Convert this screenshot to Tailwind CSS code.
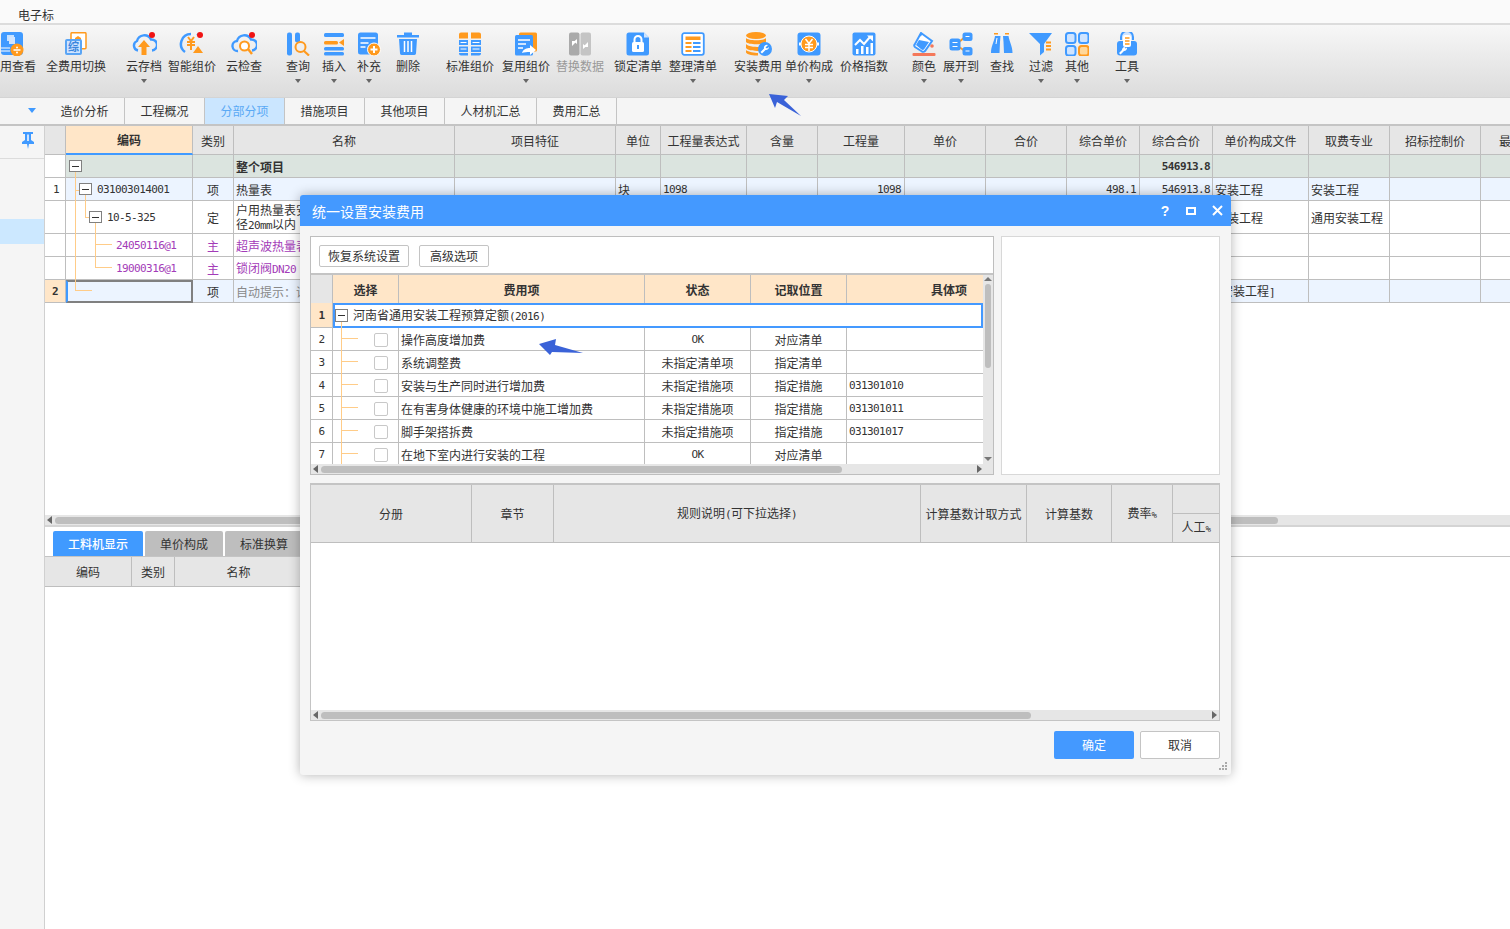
<!DOCTYPE html>
<html lang="zh-CN">
<head>
  <meta charset="UTF-8" />
  <title>统一设置安装费用</title>
  <script src="https://cdn.jsdelivr.net/npm/@tailwindcss/browser@4"></script>
</head>
<body class="bg-white text-[#333] text-[12px] leading-[14px] font-['Noto_Sans_CJK_SC','Liberation_Sans',sans-serif]">
<div class="relative w-[1510px] h-[929px] overflow-hidden flex flex-col">

  <!-- menu -->
  <div class="h-[25px] shrink-0 bg-[#fafafa] border-b-2 border-[#dcdcdc] pl-[18px] pt-[8px]">电子标</div>

  <!-- toolbar -->
  <div class="h-[73px] shrink-0 flex items-start pt-[7px] bg-gradient-to-b from-[#f7f7f7] to-[#dcdcdc] border-b border-[#d4d4d4] whitespace-nowrap">
    <div class="w-[48px] ml-[-12px] flex flex-col items-center">
      <svg class="w-[24px] h-[24px] shrink-0" viewBox="0 0 24 24"><rect x="1" width="22" height="23" rx="3" fill="#409aff"/><path d="M7 3h7v6H7z" fill="#fff" opacity=".7"/><path d="M9 5h6v7H9z" fill="#cfe4ff"/><path d="M1 16h9M1 19h9" stroke="#fff"/><circle cx="17" cy="18" r="6.5" fill="#ff9a1e"/><path d="M13.5 18h7" stroke="#fff" stroke-width="1.5"/><circle cx="17" cy="15.5" r="1" fill="#fff"/><circle cx="17" cy="20.5" r="1" fill="#fff"/></svg>
      <div class="mt-[3px]">费用查看</div>
    </div>
    <div class="w-[60px] ml-[10px] flex flex-col items-center">
      <svg class="w-[24px] h-[24px] shrink-0" viewBox="0 0 24 24"><rect x="7" y="0.7" width="15" height="16" rx="1" fill="#fff" stroke="#ff9a1e" stroke-width="1.5"/><path d="M11 6l3-2 3 2v3h-6z" fill="#ff9a1e"/><rect x="1" y="7" width="17" height="16" rx="2" fill="#5aa5f5"/><rect x="3" y="9" width="13" height="12" fill="#cfe4ff"/><text x="9.500" y="19" font-size="11" text-anchor="middle" fill="#3b86dd" font-weight="700">综</text></svg>
      <div class="mt-[3px]">全费用切换</div>
    </div>
    <div class="w-[36px] ml-[20px] flex flex-col items-center">
      <svg class="w-[26px] h-[24px] shrink-0" viewBox="0 0 26 24"><path d="M7 18.500A5 5 0 0 1 6 9a7.500 7.500 0 0 1 14-1.500 5.500 5.500 0 0 1 1 11" fill="none" stroke="#409aff" stroke-width="2.400"/><path d="M13 8l6 7h-3.500v8h-5v-8H7z" fill="#ff9a1e"/><circle cx="21" cy="3" r="3" fill="#f01414"/></svg>
      <div class="mt-[3px]">云存档</div>
      <div class="mt-[6px] border-x-[3px] border-t-[4px] border-x-transparent border-t-[#666]"></div>
    </div>
    <div class="w-[48px] ml-[6px] flex flex-col items-center">
      <svg class="w-[26px] h-[24px] shrink-0" viewBox="0 0 26 24"><path d="M12 2a10 10 0 0 0-6 18" fill="none" stroke="#409aff" stroke-width="2.500"/><path d="M20 20l-2-3M18 2l1 1" stroke="#409aff" stroke-width="2"/><path d="M9 5l3 4 3-4M8 10h8M8 13h8M12 9v9" fill="none" stroke="#ff9a1e" stroke-width="2"/><path d="M19 14l5 7h-10z" fill="#ff9a1e"/><circle cx="21" cy="3" r="3" fill="#f01414"/></svg>
      <div class="mt-[3px]">智能组价</div>
    </div>
    <div class="w-[36px] ml-[10px] flex flex-col items-center">
      <svg class="w-[26px] h-[24px] shrink-0" viewBox="0 0 26 24"><path d="M7 19A5 5 0 0 1 6 9a7.500 7.500 0 0 1 14-1.500 5.500 5.500 0 0 1 1 11" fill="none" stroke="#409aff" stroke-width="2.400"/><circle cx="13.500" cy="14" r="4.500" fill="#fff" stroke="#ff9a1e" stroke-width="2"/><path d="M17 17l4 5" stroke="#ff9a1e" stroke-width="2.400"/><circle cx="21" cy="3" r="3" fill="#f01414"/></svg>
      <div class="mt-[3px]">云检查</div>
    </div>
    <div class="w-[24px] ml-[24px] flex flex-col items-center">
      <svg class="w-[24px] h-[24px] shrink-0" viewBox="0 0 24 24"><rect x="1" y="0.500" width="5" height="23" rx="2" fill="#409aff"/><rect x="9" y="0.500" width="5" height="10" rx="2" fill="#409aff"/><circle cx="14.500" cy="15" r="5" fill="none" stroke="#ff9a1e" stroke-width="2"/><path d="M18 19l5 4.500" stroke="#ff9a1e" stroke-width="2.200"/></svg>
      <div class="mt-[3px]">查询</div>
      <div class="mt-[6px] border-x-[3px] border-t-[4px] border-x-transparent border-t-[#666]"></div>
    </div>
    <div class="w-[24px] ml-[12px] flex flex-col items-center">
      <svg class="w-[24px] h-[24px] shrink-0" viewBox="0 0 24 24"><rect x="2" y="1" width="20" height="4" rx="1.500" fill="#409aff"/><rect x="2" y="9" width="14" height="3.500" rx="1.500" fill="#ff9a1e"/><path d="M22 7v7l-5-3.500z" fill="#ff9a1e"/><rect x="2" y="15" width="20" height="3.500" rx="1.500" fill="#409aff"/><rect x="2" y="20" width="20" height="3.500" rx="1.500" fill="#409aff"/></svg>
      <div class="mt-[3px]">插入</div>
      <div class="mt-[6px] border-x-[3px] border-t-[4px] border-x-transparent border-t-[#666]"></div>
    </div>
    <div class="w-[24px] ml-[11px] flex flex-col items-center">
      <svg class="w-[24px] h-[24px] shrink-0" viewBox="0 0 24 24"><rect x="1" y="0.500" width="20" height="22" rx="2.500" fill="#409aff"/><path d="M3.500 6h15M3.500 11h8M3.500 15h5" stroke="#fff" stroke-width="1.500"/><circle cx="17" cy="17.500" r="6.500" fill="#ff9a1e" stroke="#fff"/><path d="M13.500 17.500h7M17 14v7" stroke="#fff" stroke-width="2"/></svg>
      <div class="mt-[3px]">补充</div>
      <div class="mt-[6px] border-x-[3px] border-t-[4px] border-x-transparent border-t-[#666]"></div>
    </div>
    <div class="w-[24px] ml-[15px] flex flex-col items-center">
      <svg class="w-[24px] h-[24px] shrink-0" viewBox="0 0 24 24"><path d="M1 3h22v2.500H1zM8 .500h8V3H8zM3 7h18l-1 14.500a2 2 0 0 1-2 1.500H6a2 2 0 0 1-2-1.500z" fill="#409aff"/><path d="M8.500 9v11M12 9v11M15.500 9v11" stroke="#fff" stroke-width="1.500"/></svg>
      <div class="mt-[3px]">删除</div>
    </div>
    <div class="w-[48px] ml-[26px] flex flex-col items-center">
      <svg class="w-[24px] h-[24px] shrink-0" viewBox="0 0 24 24"><path d="M1 2.500A2 2 0 0 1 3 .500h7v6H1zM13 .500h8a2 2 0 0 1 2 2v4H13z" fill="#ff9a1e"/><path d="M1 8h9v5H1zM13 8h10v5H13zM1 14.500h9V20H1zM13 14.500h10V20H13z" fill="#409aff"/><path d="M1 21h9v2.500H3a2 2 0 0 1-2-2zM13 21h10v.5a2 2 0 0 1-2 2h-8z" fill="#409aff"/><path d="M2.500 10.500h6M2.500 17h6M14.500 10.500h7M14.500 17h7" stroke="#fff"/></svg>
      <div class="mt-[3px]">标准组价</div>
    </div>
    <div class="w-[48px] ml-[8px] flex flex-col items-center">
      <svg class="w-[24px] h-[24px] shrink-0" viewBox="0 0 24 24"><rect x="5" y="0.500" width="18" height="19" rx="1.500" fill="#ff9a1e"/><rect x="1" y="3" width="18" height="20.500" rx="1.500" fill="#409aff"/><path d="M4 8h12M4 12h8M4 16h5" stroke="#fff" stroke-width="1.500"/><path d="M8 21c1-4 5-5 8-5v-3l6 5-6 5v-3c-3 0-6 0-8 1z" fill="#fff"/></svg>
      <div class="mt-[3px]">复用组价</div>
      <div class="mt-[6px] border-x-[3px] border-t-[4px] border-x-transparent border-t-[#666]"></div>
    </div>
    <div class="w-[48px] ml-[6px] flex flex-col items-center text-[#999]">
      <svg class="w-[24px] h-[24px] shrink-0" viewBox="0 0 24 24"><rect x="1" y="0.500" width="10.500" height="23" rx="2" fill="#aaa"/><rect x="12.500" y="0.500" width="10.500" height="23" rx="2" fill="#c4c4c4"/><path d="M4 14V9h5M9 7v5l-3-2.500z" fill="#fff"/><path d="M20 10v5h-5M15 17v-5l3 2.500z" fill="#fff"/></svg>
      <div class="mt-[3px]">替换数据</div>
    </div>
    <div class="w-[48px] ml-[10px] flex flex-col items-center">
      <svg class="w-[24px] h-[24px] shrink-0" viewBox="0 0 24 24"><path d="M3 .500h15l5 5V21a2.500 2.500 0 0 1-2.500 2.500H3A2.500 2.500 0 0 1 .5 21V3A2.500 2.500 0 0 1 3 .500z" fill="#409aff"/><path d="M18 .500l5 5h-5z" fill="#cfe4ff"/><rect x="6" y="10" width="12" height="10" rx="1.500" fill="#fff"/><path d="M8.500 10V7.500a3.500 3.500 0 0 1 7 0V10" fill="none" stroke="#fff" stroke-width="2"/><rect x="11" y="13" width="2" height="4" fill="#409aff"/></svg>
      <div class="mt-[3px]">锁定清单</div>
    </div>
    <div class="w-[48px] ml-[7px] flex flex-col items-center">
      <svg class="w-[24px] h-[24px] shrink-0" viewBox="0 0 24 24"><rect x="1.200" y="1.200" width="21.600" height="21.600" rx="2" fill="#fff" stroke="#409aff" stroke-width="1.800"/><rect x="4.500" y="4.500" width="15" height="3.500" fill="#ff9a1e"/><path d="M4.500 10h6v2h-6zM4.500 14h6v2h-6zM4.500 18h6v2h-6z" fill="#ff9a1e"/><path d="M12 10h7.500v2H12zM12 14h7.500v2H12zM12 18h7.500v2H12z" fill="#409aff"/></svg>
      <div class="mt-[3px]">整理清单</div>
      <div class="mt-[6px] border-x-[3px] border-t-[4px] border-x-transparent border-t-[#666]"></div>
    </div>
    <div class="w-[48px] ml-[17px] flex flex-col items-center">
      <svg class="w-[24px] h-[24px] shrink-0 overflow-visible" viewBox="0 0 24 24"><ellipse cx="10" cy="3.500" rx="10" ry="3.500" fill="#ff9a1e"/><path d="M0 6c2 3 18 3 20 0v4c-2 3-18 3-20 0zM0 12c2 3 12 3 14 3v4c-3 0-12 0-14-3zM0 18c2 2 9 3 12 3v2.500c-4 0-11-.5-12-3z" fill="#ff9a1e"/><circle cx="19" cy="17" r="7" fill="#409aff"/><path d="M22 13a3 3 0 0 0-4 3.500L14.500 20l1.500 1.500 3.500-3.500A3 3 0 0 0 23 15l-2 1.500-1.500-1z" fill="#fff"/></svg>
      <div class="mt-[3px]">安装费用</div>
      <div class="mt-[6px] border-x-[3px] border-t-[4px] border-x-transparent border-t-[#666]"></div>
    </div>
    <div class="w-[48px] ml-[3px] flex flex-col items-center">
      <svg class="w-[24px] h-[24px] shrink-0" viewBox="0 0 24 24"><rect x="0.500" y="0.500" width="23" height="23" rx="3" fill="#409aff"/><circle cx="12" cy="12" r="8" fill="#ff9a1e" stroke="#fff"/><path d="M8.500 7l3.500 4.500L15.500 7M8 12.500h8M8 15.500h8M12 11.500V19" fill="none" stroke="#fff" stroke-width="1.500"/><path d="M2 12h2M20 12h2" stroke="#fff" stroke-width="3"/></svg>
      <div class="mt-[3px]">单价构成</div>
      <div class="mt-[6px] border-x-[3px] border-t-[4px] border-x-transparent border-t-[#666]"></div>
    </div>
    <div class="w-[48px] ml-[7px] flex flex-col items-center">
      <svg class="w-[24px] h-[24px] shrink-0" viewBox="0 0 24 24"><rect x="0.500" y="0.500" width="23" height="23" rx="2" fill="#409aff"/><path d="M3 13l5-5 4 4 6-7" fill="none" stroke="#fff" stroke-width="2"/><path d="M15 3.500h6v6z" fill="#fff"/><path d="M4 17h2.500v5H4zM9 14h2.500v8H9zM14 15h2.500v7H14zM18.500 11H21v11h-2.500z" fill="#fff"/></svg>
      <div class="mt-[3px]">价格指数</div>
    </div>
    <div class="w-[24px] ml-[24px] flex flex-col items-center">
      <svg class="w-[24px] h-[24px] shrink-0" viewBox="0 0 24 24"><path d="M9 1l11 8-7 10c-1 1-2 1-3 .500L3 15c-1-1-1-2 0-3z" fill="#fff" stroke="#409aff" stroke-width="2"/><path d="M4 13l3-5 10 2-5 7.500c-1 .5-1.500.5-2.500 0z" fill="#409aff"/><path d="M8 4l2-3" stroke="#409aff" stroke-width="2"/><circle cx="20" cy="14" r="1.800" fill="#f4785a"/><rect x="0.500" y="21" width="23" height="3" rx="1" fill="#f4785a"/></svg>
      <div class="mt-[3px]">颜色</div>
      <div class="mt-[6px] border-x-[3px] border-t-[4px] border-x-transparent border-t-[#666]"></div>
    </div>
    <div class="w-[36px] ml-[7px] flex flex-col items-center">
      <svg class="w-[24px] h-[24px] shrink-0" viewBox="0 0 24 24"><path d="M10 10l6-5M10 15l6 4" stroke="#ff9a1e" stroke-width="2"/><rect x="0.500" y="6.500" width="11" height="12" rx="2.500" fill="#409aff"/><path d="M3.500 10.500h5M3.500 14.500h5" stroke="#fff"/><rect x="13.500" y="0.500" width="10" height="8.500" rx="2.500" fill="#409aff"/><rect x="13.500" y="15" width="10" height="8.500" rx="2.500" fill="#409aff"/><path d="M16.500 4.500h4M16.500 19h4" stroke="#fff"/></svg>
      <div class="mt-[3px]">展开到</div>
      <div class="mt-[6px] border-x-[3px] border-t-[4px] border-x-transparent border-t-[#666]"></div>
    </div>
    <div class="w-[24px] ml-[11px] flex flex-col items-center">
      <svg class="w-[24px] h-[24px] shrink-0" viewBox="0 0 24 24"><path d="M4 1h4v1.500H4zM15 1h4v1.500h-4z" fill="#ff9a1e"/><path d="M5 4h5.500L10 10 9.500 21H1c0-7 3-11 4-17zM13 4h5.500c1 6 4 10 4 17H14l-.5-11z" fill="#409aff"/><path d="M7 6L6 12" stroke="#fff"/></svg>
      <div class="mt-[3px]">查找</div>
    </div>
    <div class="w-[24px] ml-[15px] flex flex-col items-center">
      <svg class="w-[24px] h-[24px] shrink-0" viewBox="0 0 24 24"><path d="M0 1h23l-8 11v8l-4 3.500V12z" fill="#409aff"/><path d="M17 10.500h5M17 14h5M17 17.500h5" stroke="#ff9a1e" stroke-width="2"/></svg>
      <div class="mt-[3px]">过滤</div>
      <div class="mt-[6px] border-x-[3px] border-t-[4px] border-x-transparent border-t-[#666]"></div>
    </div>
    <div class="w-[24px] ml-[12px] flex flex-col items-center">
      <svg class="w-[24px] h-[24px] shrink-0" viewBox="0 0 24 24"><rect x="1" y="1" width="9.500" height="10" rx="2.500" fill="#cfe4ff" stroke="#409aff" stroke-width="2"/><rect x="14" y="1" width="9.500" height="10" rx="2.500" fill="#cfe4ff" stroke="#409aff" stroke-width="2"/><rect x="1" y="14" width="9.500" height="9.500" rx="2.500" fill="#cfe4ff" stroke="#409aff" stroke-width="2"/><rect x="14" y="14" width="9.500" height="9.500" rx="2.500" fill="#ffd79a" stroke="#ff9a1e" stroke-width="2"/></svg>
      <div class="mt-[3px]">其他</div>
      <div class="mt-[6px] border-x-[3px] border-t-[4px] border-x-transparent border-t-[#666]"></div>
    </div>
    <div class="w-[24px] ml-[26px] flex flex-col items-center">
      <svg class="w-[24px] h-[24px] shrink-0" viewBox="0 0 24 24"><path d="M6 8V5a6 6 0 0 1 12 0v3" fill="#cfe4ff" stroke="#409aff" stroke-width="2"/><rect x="2" y="9" width="20" height="14.500" rx="3" fill="#409aff"/><rect x="8" y="3" width="8" height="12" rx="2" fill="#fff"/><path d="M10 6h4.500M10 9h4.500M10 12h4.500" stroke="#ff9a1e" stroke-width="1.500"/><path d="M11 15a3 3 0 0 0-4 3L4 21l1.500 1.500L9 19a3 3 0 0 0 3-3.500l-1.500 1-1-1z" fill="#fff"/></svg>
      <div class="mt-[3px]">工具</div>
      <div class="mt-[6px] border-x-[3px] border-t-[4px] border-x-transparent border-t-[#666]"></div>
    </div>
  </div>

  <!-- tabs -->
  <div class="h-[28px] shrink-0 flex bg-[#f5f5f5] border-b-2 border-[#c4c4c4]">
    <div class="w-[45px] flex items-center justify-end pr-[9px] pb-[2px]"><div class="border-x-[4px] border-t-[5px] border-x-transparent border-t-[#409aff]"></div></div>
    <div class="w-[80px] border-r border-[#c4c4c4] flex items-center justify-center">造价分析</div>
    <div class="w-[80px] border-r border-[#c4c4c4] flex items-center justify-center">工程概况</div>
    <div class="w-[80px] border-r border-[#c4c4c4] flex items-center justify-center bg-[#cbe6ff] text-[#5aa9f5]">分部分项</div>
    <div class="w-[80px] border-r border-[#c4c4c4] flex items-center justify-center">措施项目</div>
    <div class="w-[80px] border-r border-[#c4c4c4] flex items-center justify-center">其他项目</div>
    <div class="w-[92px] border-r border-[#c4c4c4] flex items-center justify-center">人材机汇总</div>
    <div class="w-[80px] border-r border-[#c4c4c4] flex items-center justify-center">费用汇总</div>
  </div>

  <!-- body -->
  <div class="flex-1 flex min-h-0">
    <div class="w-[45px] shrink-0 bg-[#f5f5f5] border-r border-[#d0d0d0]">
      <div class="h-[33px] border-b border-[#dcdcdc] flex justify-end pr-[9px] pt-[6px]">
        <svg class="w-[14px] h-[17px]" viewBox="0 0 14 17"><path d="M2 0h10v2h-2v6l3 2v2H8l-1 5-1-5H1v-2l3-2V2H2z" fill="#409aff"/><path d="M6 2.500h2V9H6z" fill="#cfe4ff"/></svg>
      </div>
      <div class="h-[60px]"></div>
      <div class="h-[25px] bg-[#cce8ff]"></div>
    </div>
    <div class="flex-1 min-w-0 flex flex-col">
      <div class="h-[389px] shrink-0 overflow-hidden">
        <table class="table-fixed border-separate border-spacing-0 w-[1496px] [&_td]:pt-[1px]">
          <colgroup><col class="w-[21px]"/><col class="w-[127px]"/><col class="w-[41px]"/><col class="w-[221px]"/><col class="w-[161px]"/><col class="w-[45px]"/><col class="w-[86px]"/><col class="w-[71px]"/><col class="w-[87px]"/><col class="w-[81px]"/><col class="w-[81px]"/><col class="w-[73px]"/><col class="w-[73px]"/><col class="w-[96px]"/><col class="w-[81px]"/><col class="w-[91px]"/><col class="w-[60px]"/></colgroup>
          <tr class="h-[29px] bg-[#e6e6e6] text-center">
            <td class="border-r border-b border-[#bebebe]"></td>
            <td class="border-r border-b-2 border-r-[#bebebe] border-b-[#409aff] bg-[#ffe6c8] font-bold">编码</td>
            <td class="border-r border-b border-[#bebebe]">类别</td>
            <td class="border-r border-b border-[#bebebe]">名称</td>
            <td class="border-r border-b border-[#bebebe]">项目特征</td>
            <td class="border-r border-b border-[#bebebe]">单位</td>
            <td class="border-r border-b border-[#bebebe]">工程量表达式</td>
            <td class="border-r border-b border-[#bebebe]">含量</td>
            <td class="border-r border-b border-[#bebebe]">工程量</td>
            <td class="border-r border-b border-[#bebebe]">单价</td>
            <td class="border-r border-b border-[#bebebe]">合价</td>
            <td class="border-r border-b border-[#bebebe]">综合单价</td>
            <td class="border-r border-b border-[#bebebe]">综合合价</td>
            <td class="border-r border-b border-[#bebebe]">单价构成文件</td>
            <td class="border-r border-b border-[#bebebe]">取费专业</td>
            <td class="border-r border-b border-[#bebebe]">招标控制价</td>
            <td class="border-b border-[#bebebe] text-left pl-[18px]">最</td>
          </tr>
          <tr class="h-[23px]">
            <td class="border-r border-b border-[#bebebe]"></td>
            <td class="border-r border-b border-[#bebebe] bg-[#dbe4df]"></td>
            <td class="border-r border-b border-[#bebebe] bg-[#dbe4df]"></td>
            <td class="border-r border-b border-[#bebebe] bg-[#dbe4df] pl-[2px] font-bold">整个项目</td>
            <td class="border-r border-b border-[#bebebe] bg-[#dbe4df]"></td>
            <td class="border-r border-b border-[#bebebe] bg-[#dbe4df]"></td>
            <td class="border-r border-b border-[#bebebe] bg-[#dbe4df]"></td>
            <td class="border-r border-b border-[#bebebe] bg-[#dbe4df]"></td>
            <td class="border-r border-b border-[#bebebe] bg-[#dbe4df]"></td>
            <td class="border-r border-b border-[#bebebe] bg-[#dbe4df]"></td>
            <td class="border-r border-b border-[#bebebe] bg-[#dbe4df]"></td>
            <td class="border-r border-b border-[#bebebe] bg-[#dbe4df]"></td>
            <td class="border-r border-b border-[#bebebe] bg-[#dbe4df] text-right pr-[2px] font-bold font-['DejaVu_Sans_Mono',monospace] text-[11px] tracking-[-0.6px]">546913.8</td>
            <td class="border-r border-b border-[#bebebe] bg-[#dbe4df]"></td>
            <td class="border-r border-b border-[#bebebe] bg-[#dbe4df]"></td>
            <td class="border-r border-b border-[#bebebe] bg-[#dbe4df]"></td>
            <td class="border-b border-[#bebebe] bg-[#dbe4df]"></td>
          </tr>
          <tr class="h-[23px] bg-[#ecf4ff]">
            <td class="border-r border-b border-[#bebebe] bg-white pl-[8px] font-['DejaVu_Sans_Mono',monospace] text-[11px] tracking-[-0.6px]">1</td>
            <td class="border-r border-b border-[#bebebe] pl-[31px] font-['DejaVu_Sans_Mono',monospace] text-[11px] tracking-[-0.6px]">031003014001</td>
            <td class="border-r border-b border-[#bebebe] text-center">项</td>
            <td class="border-r border-b border-[#bebebe] pl-[2px]">热量表</td>
            <td class="border-r border-b border-[#bebebe]"></td>
            <td class="border-r border-b border-[#bebebe] pl-[2px]">块</td>
            <td class="border-r border-b border-[#bebebe] pl-[2px] font-['DejaVu_Sans_Mono',monospace] text-[11px] tracking-[-0.6px]">1098</td>
            <td class="border-r border-b border-[#bebebe]"></td>
            <td class="border-r border-b border-[#bebebe] text-right pr-[3px] font-['DejaVu_Sans_Mono',monospace] text-[11px] tracking-[-0.6px]">1098</td>
            <td class="border-r border-b border-[#bebebe]"></td>
            <td class="border-r border-b border-[#bebebe]"></td>
            <td class="border-r border-b border-[#bebebe] text-right pr-[3px] font-['DejaVu_Sans_Mono',monospace] text-[11px] tracking-[-0.6px]">498.1</td>
            <td class="border-r border-b border-[#bebebe] text-right pr-[2px] font-['DejaVu_Sans_Mono',monospace] text-[11px] tracking-[-0.6px]">546913.8</td>
            <td class="border-r border-b border-[#bebebe] pl-[2px]">安装工程</td>
            <td class="border-r border-b border-[#bebebe] pl-[2px]">安装工程</td>
            <td class="border-r border-b border-[#bebebe]"></td>
            <td class="border-b border-[#bebebe]"></td>
          </tr>
          <tr class="h-[33px]">
            <td class="border-r border-b border-[#bebebe]"></td>
            <td class="border-r border-b border-[#bebebe] pl-[41px] font-['DejaVu_Sans_Mono',monospace] text-[11px] tracking-[-0.6px]">10-5-325</td>
            <td class="border-r border-b border-[#bebebe] text-center">定</td>
            <td class="border-r border-b border-[#bebebe] pl-[2px] whitespace-nowrap overflow-hidden">户用热量表安装 公称直<br/>径<span class="font-['DejaVu_Sans_Mono',monospace] text-[11px] tracking-[-0.6px]">20mm</span>以内</td>
            <td class="border-r border-b border-[#bebebe]"></td>
            <td class="border-r border-b border-[#bebebe]"></td>
            <td class="border-r border-b border-[#bebebe]"></td>
            <td class="border-r border-b border-[#bebebe]"></td>
            <td class="border-r border-b border-[#bebebe]"></td>
            <td class="border-r border-b border-[#bebebe]"></td>
            <td class="border-r border-b border-[#bebebe]"></td>
            <td class="border-r border-b border-[#bebebe]"></td>
            <td class="border-r border-b border-[#bebebe]"></td>
            <td class="border-r border-b border-[#bebebe] pl-[2px]">安装工程</td>
            <td class="border-r border-b border-[#bebebe] pl-[2px]">通用安装工程</td>
            <td class="border-r border-b border-[#bebebe]"></td>
            <td class="border-b border-[#bebebe]"></td>
          </tr>
          <tr class="h-[23px] text-[#a33bb8]">
            <td class="border-r border-b border-[#bebebe]"></td>
            <td class="border-r border-b border-[#bebebe] pl-[50px] font-['DejaVu_Sans_Mono',monospace] text-[11px] tracking-[-0.6px]">24050116@1</td>
            <td class="border-r border-b border-[#bebebe] text-center">主</td>
            <td class="border-r border-b border-[#bebebe] pl-[2px] whitespace-nowrap overflow-hidden">超声波热量表</td>
            <td class="border-r border-b border-[#bebebe]"></td>
            <td class="border-r border-b border-[#bebebe]"></td>
            <td class="border-r border-b border-[#bebebe]"></td>
            <td class="border-r border-b border-[#bebebe]"></td>
            <td class="border-r border-b border-[#bebebe]"></td>
            <td class="border-r border-b border-[#bebebe]"></td>
            <td class="border-r border-b border-[#bebebe]"></td>
            <td class="border-r border-b border-[#bebebe]"></td>
            <td class="border-r border-b border-[#bebebe]"></td>
            <td class="border-r border-b border-[#bebebe]"></td>
            <td class="border-r border-b border-[#bebebe]"></td>
            <td class="border-r border-b border-[#bebebe]"></td>
            <td class="border-b border-[#bebebe]"></td>
          </tr>
          <tr class="h-[23px] text-[#a33bb8]">
            <td class="border-r border-b border-[#bebebe]"></td>
            <td class="border-r border-b border-[#bebebe] pl-[50px] font-['DejaVu_Sans_Mono',monospace] text-[11px] tracking-[-0.6px]">19000316@1</td>
            <td class="border-r border-b border-[#bebebe] text-center">主</td>
            <td class="border-r border-b border-[#bebebe] pl-[2px] whitespace-nowrap overflow-hidden">锁闭阀<span class="font-['DejaVu_Sans_Mono',monospace] text-[11px] tracking-[-0.6px]">DN20</span></td>
            <td class="border-r border-b border-[#bebebe]"></td>
            <td class="border-r border-b border-[#bebebe]"></td>
            <td class="border-r border-b border-[#bebebe]"></td>
            <td class="border-r border-b border-[#bebebe]"></td>
            <td class="border-r border-b border-[#bebebe]"></td>
            <td class="border-r border-b border-[#bebebe]"></td>
            <td class="border-r border-b border-[#bebebe]"></td>
            <td class="border-r border-b border-[#bebebe]"></td>
            <td class="border-r border-b border-[#bebebe]"></td>
            <td class="border-r border-b border-[#bebebe]"></td>
            <td class="border-r border-b border-[#bebebe]"></td>
            <td class="border-r border-b border-[#bebebe]"></td>
            <td class="border-b border-[#bebebe]"></td>
          </tr>
          <tr class="h-[23px] bg-[#ecf4ff]">
            <td class="border-r border-b border-[#bebebe] bg-[#ffe6c8] text-center font-bold font-['DejaVu_Sans_Mono',monospace] text-[11px] tracking-[-0.6px]">2</td>
            <td class="border-2 border-l-[#409aff] border-[#808080]"></td>
            <td class="border-r border-b border-[#bebebe] text-center">项</td>
            <td class="border-r border-b border-[#bebebe] pl-[2px] text-[#888] whitespace-nowrap overflow-hidden">自动提示：请输入清单简称</td>
            <td class="border-r border-b border-[#bebebe]"></td>
            <td class="border-r border-b border-[#bebebe]"></td>
            <td class="border-r border-b border-[#bebebe]"></td>
            <td class="border-r border-b border-[#bebebe]"></td>
            <td class="border-r border-b border-[#bebebe]"></td>
            <td class="border-r border-b border-[#bebebe]"></td>
            <td class="border-r border-b border-[#bebebe]"></td>
            <td class="border-r border-b border-[#bebebe]"></td>
            <td class="border-r border-b border-[#bebebe]"></td>
            <td class="border-r border-b border-[#bebebe] pl-[2px]"><span class="font-['DejaVu_Sans_Mono',monospace] text-[11px] tracking-[-0.6px]">[</span>安装工程<span class="font-['DejaVu_Sans_Mono',monospace] text-[11px] tracking-[-0.6px]">]</span></td>
            <td class="border-r border-b border-[#bebebe]"></td>
            <td class="border-r border-b border-[#bebebe]"></td>
            <td class="border-b border-[#bebebe]"></td>
          </tr>
        </table>
      </div>
      <!-- h scrollbar -->
      <div class="h-[10px] shrink-0 bg-[#e6e6e6] flex items-center pl-[2px]">
        <div class="border-y-[4px] border-r-[5px] border-y-transparent border-r-[#666]"></div>
        <div class="ml-[3px] w-[1223px] h-[7px] rounded-full bg-[#bebebe]"></div>
      </div>
      <div class="h-[32px] shrink-0 border-t-2 border-b border-t-[#d4d4d4] border-b-[#c4c4c4] flex items-end pl-[8px] gap-[2px]">
        <div class="w-[90px] h-[25px] bg-[#409aff] text-white rounded-t-[2px] flex items-center justify-center font-medium">工料机显示</div>
        <div class="w-[78px] h-[25px] bg-[#bebebe] rounded-t-[2px] flex items-center justify-center">单价构成</div>
        <div class="w-[78px] h-[25px] bg-[#bebebe] rounded-t-[2px] flex items-center justify-center">标准换算</div>
      </div>
      <div class="h-[30px] shrink-0 flex">
        <div class="w-[87px] bg-[#e6e6e6] border-r border-b border-[#bebebe] flex items-center justify-center">编码</div>
        <div class="w-[43px] bg-[#e6e6e6] border-r border-b border-[#bebebe] flex items-center justify-center">类别</div>
        <div class="w-[128px] bg-[#e6e6e6] border-r border-b border-[#bebebe] flex items-center justify-center">名称</div>
      </div>
    </div>
  </div>

  <!-- tree lines of the main grid -->
  <svg class="absolute left-0 top-0 pointer-events-none" width="200" height="310" viewBox="0 0 200 310">
    <g fill="none" stroke="#ffcc88" shape-rendering="crispEdges">
      <path d="M75.500 172V290.500H92M75.500 190.500H79M85.500 194V217.500H89M95.500 223V267.500H112M95.500 244.500H112"/>
    </g>
    <g fill="#fff" stroke="#808080" shape-rendering="crispEdges">
      <rect x="69.500" y="160.500" width="12" height="11"/>
      <rect x="79.500" y="183.500" width="12" height="11"/>
      <rect x="89.500" y="211.500" width="12" height="11"/>
    </g>
    <path d="M72 166.500h7M82 189.500h7M92 217.500h7" stroke="#333" shape-rendering="crispEdges"/>
  </svg>

  <!-- toolbar arrow -->
  <svg class="absolute left-[760px] top-[90px]" width="50" height="32" viewBox="0 0 50 32"><path d="M9 4L28 6l-4 4 17 16-24-14-2 6z" fill="#3a62d8"/></svg>

  <!-- dialog -->
  <div class="absolute left-[300px] top-[195px] w-[931px] h-[580px] bg-[#f5f5f5] rounded-[3px] shadow-[0_0_12px_rgba(0,0,0,0.3)] flex flex-col">
    <div class="h-[31px] shrink-0 bg-[#4499ff] rounded-t-[3px] text-white text-[14px] flex items-center pl-[12px]">
      <span class="flex-1">统一设置安装费用</span>
      <span class="w-[12px] text-center font-bold text-[14px] mr-[15px] font-['Liberation_Sans',sans-serif]">?</span>
      <span class="w-[10px] h-[8px] border-2 border-white mr-[16px]"></span>
      <svg class="w-[11px] h-[11px] mr-[8px]" viewBox="0 0 11 11"><path d="M1 1l9 9M10 1l-9 9" stroke="#fff" stroke-width="2"/></svg>
    </div>

    <div class="flex mt-[10px] ml-[10px] gap-[7px] shrink-0">
      <div class="w-[684px] h-[239px] bg-white border border-[#bebebe] flex flex-col">
        <div class="h-[38px] shrink-0 border-b-2 border-[#c4c4c4] flex items-start gap-[10px] pl-[8px] pt-[8px]">
          <div class="w-[90px] h-[22px] border border-[#c4c4c4] rounded-[2px] flex items-center justify-center">恢复系统设置</div>
          <div class="w-[70px] h-[22px] border border-[#c4c4c4] rounded-[2px] flex items-center justify-center">高级选项</div>
        </div>
        <div class="flex h-[189px] shrink-0">
          <div class="relative w-[672px] overflow-hidden">
            <table class="table-fixed border-separate border-spacing-0 w-[672px] [&_td]:pt-[1px]">
              <colgroup><col class="w-[22px]"/><col class="w-[66px]"/><col class="w-[246px]"/><col class="w-[106px]"/><col class="w-[96px]"/><col class="w-[136px]"/></colgroup>
              <tr class="h-[28px] text-center font-bold bg-[#ffe6c8]">
                <td class="bg-[#e6e6e6] border-r border-[#bebebe]"></td>
                <td class="border-r border-[#bebebe]">选择</td>
                <td class="border-r border-[#bebebe]">费用项</td>
                <td class="border-r border-[#bebebe]">状态</td>
                <td class="border-r border-[#bebebe]">记取位置</td>
                <td class="text-right pr-[16px]">具体项</td>
              </tr>
              <tr class="h-[25px]">
                <td class="bg-[#ffe6c8] border-r border-b border-[#bebebe] text-center font-bold font-['DejaVu_Sans_Mono',monospace] text-[11px] tracking-[-0.6px]">1</td>
                <td colspan="5" class="shadow-[inset_0_0_0_2px_#4499ff] pl-[20px]">河南省通用安装工程预算定额<span class="font-['DejaVu_Sans_Mono',monospace] text-[11px] tracking-[-0.6px]">(2016)</span></td>
              </tr>
              <tr class="h-[23px]">
                <td class="border-r border-b border-[#bebebe] text-center font-['DejaVu_Sans_Mono',monospace] text-[11px] tracking-[-0.6px]">2</td>
                <td class="border-r border-b border-[#bebebe] pl-[41px]"><div class="w-[14px] h-[14px] rounded-[2px] border border-[#c8c8c8]"></div></td>
                <td class="border-r border-b border-[#bebebe] pl-[2px]">操作高度增加费</td>
                <td class="border-r border-b border-[#bebebe] text-center font-['DejaVu_Sans_Mono',monospace] text-[11px] tracking-[-0.6px]">OK</td>
                <td class="border-r border-b border-[#bebebe] text-center">对应清单</td>
                <td class="border-b border-[#bebebe]"></td>
              </tr>
              <tr class="h-[23px]">
                <td class="border-r border-b border-[#bebebe] text-center font-['DejaVu_Sans_Mono',monospace] text-[11px] tracking-[-0.6px]">3</td>
                <td class="border-r border-b border-[#bebebe] pl-[41px]"><div class="w-[14px] h-[14px] rounded-[2px] border border-[#c8c8c8]"></div></td>
                <td class="border-r border-b border-[#bebebe] pl-[2px]">系统调整费</td>
                <td class="border-r border-b border-[#bebebe] text-center">未指定清单项</td>
                <td class="border-r border-b border-[#bebebe] text-center">指定清单</td>
                <td class="border-b border-[#bebebe]"></td>
              </tr>
              <tr class="h-[23px]">
                <td class="border-r border-b border-[#bebebe] text-center font-['DejaVu_Sans_Mono',monospace] text-[11px] tracking-[-0.6px]">4</td>
                <td class="border-r border-b border-[#bebebe] pl-[41px]"><div class="w-[14px] h-[14px] rounded-[2px] border border-[#c8c8c8]"></div></td>
                <td class="border-r border-b border-[#bebebe] pl-[2px]">安装与生产同时进行增加费</td>
                <td class="border-r border-b border-[#bebebe] text-center">未指定措施项</td>
                <td class="border-r border-b border-[#bebebe] text-center">指定措施</td>
                <td class="border-b border-[#bebebe] pl-[2px] font-['DejaVu_Sans_Mono',monospace] text-[11px] tracking-[-0.6px]">031301010</td>
              </tr>
              <tr class="h-[23px]">
                <td class="border-r border-b border-[#bebebe] text-center font-['DejaVu_Sans_Mono',monospace] text-[11px] tracking-[-0.6px]">5</td>
                <td class="border-r border-b border-[#bebebe] pl-[41px]"><div class="w-[14px] h-[14px] rounded-[2px] border border-[#c8c8c8]"></div></td>
                <td class="border-r border-b border-[#bebebe] pl-[2px]">在有害身体健康的环境中施工增加费</td>
                <td class="border-r border-b border-[#bebebe] text-center">未指定措施项</td>
                <td class="border-r border-b border-[#bebebe] text-center">指定措施</td>
                <td class="border-b border-[#bebebe] pl-[2px] font-['DejaVu_Sans_Mono',monospace] text-[11px] tracking-[-0.6px]">031301011</td>
              </tr>
              <tr class="h-[23px]">
                <td class="border-r border-b border-[#bebebe] text-center font-['DejaVu_Sans_Mono',monospace] text-[11px] tracking-[-0.6px]">6</td>
                <td class="border-r border-b border-[#bebebe] pl-[41px]"><div class="w-[14px] h-[14px] rounded-[2px] border border-[#c8c8c8]"></div></td>
                <td class="border-r border-b border-[#bebebe] pl-[2px]">脚手架搭拆费</td>
                <td class="border-r border-b border-[#bebebe] text-center">未指定措施项</td>
                <td class="border-r border-b border-[#bebebe] text-center">指定措施</td>
                <td class="border-b border-[#bebebe] pl-[2px] font-['DejaVu_Sans_Mono',monospace] text-[11px] tracking-[-0.6px]">031301017</td>
              </tr>
              <tr class="h-[23px]">
                <td class="border-r border-b border-[#bebebe] text-center font-['DejaVu_Sans_Mono',monospace] text-[11px] tracking-[-0.6px]">7</td>
                <td class="border-r border-b border-[#bebebe] pl-[41px]"><div class="w-[14px] h-[14px] rounded-[2px] border border-[#c8c8c8]"></div></td>
                <td class="border-r border-b border-[#bebebe] pl-[2px]">在地下室内进行安装的工程</td>
                <td class="border-r border-b border-[#bebebe] text-center font-['DejaVu_Sans_Mono',monospace] text-[11px] tracking-[-0.6px]">OK</td>
                <td class="border-r border-b border-[#bebebe] text-center">对应清单</td>
                <td class="border-b border-[#bebebe]"></td>
              </tr>
            </table>
            <!-- tree lines -->
            <svg class="absolute left-0 top-0 pointer-events-none" width="60" height="189" viewBox="0 0 60 189">
              <path d="M30.500 47V189M30.500 63.500H47M30.500 86.500H47M30.500 109.500H47M30.500 132.500H47M30.500 155.500H47M30.500 178.500H47" fill="none" stroke="#ffcc88" shape-rendering="crispEdges"/>
              <rect x="24.500" y="34.500" width="12" height="12" fill="#fff" stroke="#808080" shape-rendering="crispEdges"/>
              <path d="M27 40.500h7" stroke="#333" shape-rendering="crispEdges"/>
            </svg>
          </div>
          <div class="w-[10px] bg-[#e6e6e6] flex flex-col items-center pt-[2px]">
            <div class="border-x-[4px] border-b-[4px] border-x-transparent border-b-[#777]"></div>
            <div class="mt-[3px] w-[6px] h-[84px] rounded-full bg-[#bebebe]"></div>
            <div class="mt-auto mb-[3px] border-x-[4px] border-t-[4px] border-x-transparent border-t-[#777]"></div>
          </div>
        </div>
        <div class="h-[10px] shrink-0 bg-[#e6e6e6] flex items-center pl-[2px]">
          <div class="border-y-[4px] border-r-[5px] border-y-transparent border-r-[#666]"></div>
          <div class="ml-[3px] w-[521px] h-[7px] rounded-full bg-[#bebebe]"></div>
          <div class="ml-[135px] border-y-[4px] border-l-[5px] border-y-transparent border-l-[#666]"></div>
        </div>
      </div>
      <div class="w-[219px] h-[239px] bg-white border border-[#d8d8d8]"></div>
    </div>

    <div class="ml-[10px] mt-[8px] w-[910px] h-[238px] shrink-0 bg-white border border-t-2 border-[#c4c4c4] flex flex-col">
      <table class="table-fixed border-separate border-spacing-0 w-[908px] bg-[#e6e6e6] text-center">
        <colgroup><col class="w-[161px]"/><col class="w-[82px]"/><col class="w-[367px]"/><col class="w-[106px]"/><col class="w-[85px]"/><col class="w-[61px]"/><col class="w-[46px]"/></colgroup>
        <tr class="h-[29px]">
          <td rowspan="2" class="border-r border-b border-[#bebebe]">分册</td>
          <td rowspan="2" class="border-r border-b border-[#bebebe]">章节</td>
          <td rowspan="2" class="border-r border-b border-[#bebebe]">规则说明<span class="font-['DejaVu_Sans_Mono',monospace] text-[11px] tracking-[-0.6px]">(</span>可下拉选择<span class="font-['DejaVu_Sans_Mono',monospace] text-[11px] tracking-[-0.6px]">)</span></td>
          <td rowspan="2" class="border-r border-b border-[#bebebe]">计算基数计取方式</td>
          <td rowspan="2" class="border-r border-b border-[#bebebe]">计算基数</td>
          <td rowspan="2" class="border-r border-b border-[#bebebe]">费率<span class="font-['DejaVu_Sans_Mono',monospace] text-[9px] tracking-[-0.6px]">%</span></td>
          <td class="border-b border-[#bebebe]"></td>
        </tr>
        <tr class="h-[29px]"><td class="border-b border-[#bebebe]">人工<span class="font-['DejaVu_Sans_Mono',monospace] text-[9px] tracking-[-0.6px]">%</span></td></tr>
      </table>
      <div class="flex-1"></div>
      <div class="h-[10px] shrink-0 bg-[#e6e6e6] flex items-center pl-[2px]">
        <div class="border-y-[4px] border-r-[5px] border-y-transparent border-r-[#666]"></div>
        <div class="ml-[3px] w-[710px] h-[7px] rounded-full bg-[#bebebe]"></div>
        <div class="ml-auto mr-[2px] border-y-[4px] border-l-[5px] border-y-transparent border-l-[#666]"></div>
      </div>
    </div>

    <div class="flex justify-end gap-[6px] pr-[11px] mt-[10px]">
      <div class="w-[80px] h-[28px] bg-[#4499ff] text-white rounded-[2px] flex items-center justify-center">确定</div>
      <div class="w-[80px] h-[28px] bg-white border border-[#c4c4c4] rounded-[2px] flex items-center justify-center">取消</div>
    </div>

    <!-- resize grip -->
    <svg class="absolute right-[3px] bottom-[4px]" width="9" height="9" viewBox="0 0 9 9"><path d="M6 0h2v2H6zM3 3h2v2H3zM6 3h2v2H6zM0 6h2v2H0zM3 6h2v2H3zM6 6h2v2H6z" fill="#aaa"/></svg>
  </div>

  <!-- dialog arrow -->
  <svg class="absolute left-[535px] top-[335px]" width="52" height="24" viewBox="0 0 52 24"><path d="M4 9L21 4l-1 6 28 8-31-1-2 3z" fill="#3a62d8"/></svg>
</div>
</body>
</html>
